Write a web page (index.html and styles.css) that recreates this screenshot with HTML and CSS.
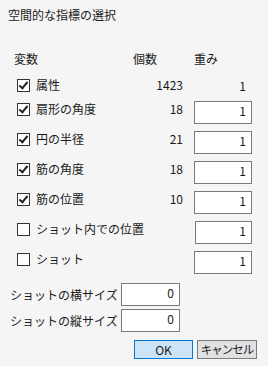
FILE: index.html
```html
<!DOCTYPE html>
<html lang="ja">
<head>
  <meta charset="UTF-8">
  <title>空間的な指標の選択</title>
  <link rel="stylesheet" href="styles.css">
</head>
<body>
  <div class="dialog">
    <div class="title">空間的な指標の選択</div>

    <div class="header">
      <span class="h-var">変数</span>
      <span class="h-count">個数</span>
      <span class="h-weight">重み</span>
    </div>

    <div class="rows">
      <div class="row first">
        <span class="check on"></span>
        <span class="label">属性</span>
        <span class="count">1423</span>
        <span class="weight plain">1</span>
      </div>
      <div class="row">
        <span class="check on"></span>
        <span class="label">扇形の角度</span>
        <span class="count">18</span>
        <span class="weight">1</span>
      </div>
      <div class="row">
        <span class="check on"></span>
        <span class="label">円の半径</span>
        <span class="count">21</span>
        <span class="weight">1</span>
      </div>
      <div class="row">
        <span class="check on"></span>
        <span class="label">筋の角度</span>
        <span class="count">18</span>
        <span class="weight">1</span>
      </div>
      <div class="row">
        <span class="check on"></span>
        <span class="label">筋の位置</span>
        <span class="count">10</span>
        <span class="weight">1</span>
      </div>
      <div class="row">
        <span class="check"></span>
        <span class="label">ショット内での位置</span>
        <span class="count"></span>
        <span class="weight">1</span>
      </div>
      <div class="row">
        <span class="check"></span>
        <span class="label">ショット</span>
        <span class="count"></span>
        <span class="weight">1</span>
      </div>
    </div>

    <div class="sizes">
      <div class="size-row">
        <span class="size-label">ショットの横サイズ</span>
        <span class="size-box">0</span>
      </div>
      <div class="size-row">
        <span class="size-label">ショットの縦サイズ</span>
        <span class="size-box">0</span>
      </div>
    </div>

    <div class="buttons">
      <button class="ok">OK</button>
      <button class="cancel">キャンセル</button>
    </div>
  </div>
</body>
</html>
```
FILE: styles.css
```css
body {
  margin: 0;
  background: #f5f5f5;
  font-family: "Noto Sans CJK JP", "Noto Sans", sans-serif;
  font-size: 12px;
  color: #1a1a1a;
}
.dialog {
  width: 268px;
  height: 366px;
}
.title {
  padding: 7px 0 0 8px;
  line-height: 16px;
}
.header {
  display: flex;
  margin-top: 28px;
  padding-left: 14px;
  line-height: 16px;
}
.h-var {
  width: 119px;
}
.h-count {
  width: 61px;
}
.rows {
  display: flex;
  flex-direction: column;
  gap: 7px;
  margin-top: 10px;
  padding: 0 16px 0 17px;
}
.row {
  display: flex;
  align-items: flex-start;
  height: 23px;
  line-height: 16px;
}
.row.first {
  height: 17px;
}
.check {
  position: relative;
  width: 11px;
  height: 11px;
  margin-top: 2px;
  margin-right: 6px;
  border: 1px solid #333;
  background: #fff;
}
.check.on::after {
  content: "";
  position: absolute;
  left: 3px;
  top: 0px;
  width: 3px;
  height: 7px;
  border: solid #222;
  border-width: 0 2px 2px 0;
  transform: rotate(40deg);
}
.label {
  flex: 1;
  white-space: nowrap;
}
.count {
  width: 40px;
  text-align: right;
}
.weight {
  box-sizing: border-box;
  width: 58px;
  height: 23px;
  margin-left: 11px;
  padding: 1px 5px 0 0;
  border: 1px solid #7a7a7a;
  background: #fff;
  text-align: right;
}
.weight.plain {
  border-color: transparent;
  background: none;
  height: 17px;
  padding-top: 0;
}
.sizes {
  display: flex;
  flex-direction: column;
  gap: 3px;
  margin-top: 9px;
  padding-left: 10px;
}
.size-row {
  display: flex;
  align-items: center;
}
.size-label {
  width: 111px;
  line-height: 16px;
  white-space: nowrap;
}
.size-box {
  box-sizing: border-box;
  width: 59px;
  height: 23px;
  padding: 1px 5px 0 0;
  border: 1px solid #7a7a7a;
  background: #fff;
  text-align: right;
  line-height: 16px;
}
.buttons {
  display: flex;
  justify-content: flex-end;
  gap: 4px;
  margin-top: 8px;
  padding-right: 11px;
}
button {
  box-sizing: border-box;
  height: 19px;
  padding: 0;
  font-family: inherit;
  font-size: 12px;
  line-height: 15px;
  color: #1a1a1a;
  white-space: nowrap;
}
.ok {
  width: 59px;
  background: #cce4f7;
  border: 1px solid #0078d7;
}
.cancel {
  width: 60px;
  background: #e1e1e1;
  border: 1px solid #7a7a7a;
  letter-spacing: -1px;
  font-size: 11.5px;
}
```
